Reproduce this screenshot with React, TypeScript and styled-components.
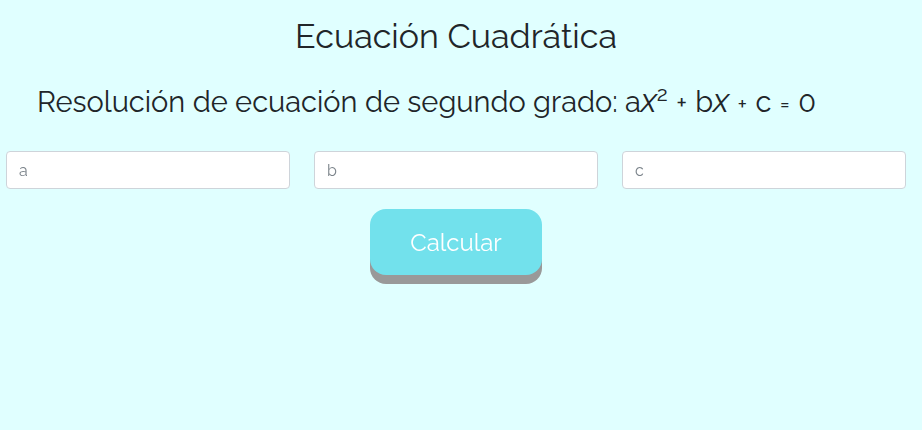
import React from "react";
import styled, { createGlobalStyle } from "styled-components";

const Global = createGlobalStyle`
  html, body { margin: 0; padding: 0; background: #e0ffff; }
  body { font-family: "Raleway", "Lato", "Open Sans", sans-serif; color: #212529; }
  * { box-sizing: border-box; }
`;

const Page = styled.div`
  width: 900px;
  margin-left: 6px;
  padding-bottom: 40px;
  display: flex;
  flex-direction: column;
  align-items: center;
`;

const Title = styled.h1`
  margin: 16px 0 0;
  font-weight: 400;
  font-size: 34px;
  line-height: 40px;
  text-align: center;
`;

const Subtitle = styled.h2`
  align-self: stretch;
  margin: 29px 0 0;
  padding-left: 31px;
  font-weight: 400;
  font-size: 29px;
  line-height: 34px;
  white-space: nowrap;
`;

const Var = styled.i`
  font-style: italic;
  font-size: 33px;
  line-height: 0;
`;

const Sup = styled.sup`
  font-size: 21px;
  line-height: 0;
`;

const Op = styled.span<{ $size: number }>`
  font-size: ${(p) => p.$size}px;
  line-height: 0;
  margin: 0 1px;
`;

const Inputs = styled.div`
  align-self: stretch;
  display: grid;
  grid-template-columns: repeat(3, 1fr);
  gap: 24px;
  margin-top: 32px;
`;

const Field = styled.input`
  height: 38px;
  width: 100%;
  padding: 6px 12px;
  border: 1px solid #ced4da;
  border-radius: 4px;
  background: #fff;
  font-family: inherit;
  font-size: 16px;
  color: #495057;
  &::placeholder { color: #6c757d; opacity: 0.9; }
`;

const Button = styled.button`
  margin-top: 20px;
  width: 172px;
  height: 66px;
  border: none;
  border-radius: 16px;
  background: #72e1ec;
  filter: drop-shadow(0 9px 0 #999999);
  color: #ffffff;
  font-family: inherit;
  font-size: 24px;
  cursor: pointer;
`;

export default function App() {
  return (
    <>
      <Global />
      <Page>
        <Title>Ecuación Cuadrática</Title>
        <Subtitle>
          Resolución de ecuación de segundo grado: a<Var>x</Var>
          <Sup>2</Sup> <Op $size={26}>+</Op> b<Var>x</Var> <Op $size={23}>+</Op> c{" "}
          <Op $size={23}>=</Op> 0
        </Subtitle>
        <Inputs>
          <Field placeholder="a" />
          <Field placeholder="b" />
          <Field placeholder="c" />
        </Inputs>
        <Button>Calcular</Button>
      </Page>
    </>
  );
}
